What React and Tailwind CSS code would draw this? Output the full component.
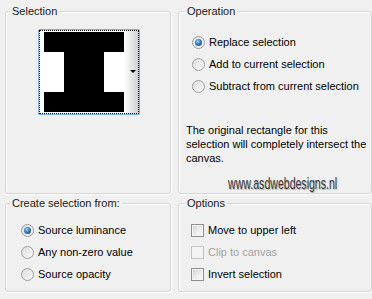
import React from 'react';

const FONT = { fontFamily: '"Liberation Sans", Arial, sans-serif' };

function Group({ title, className = '', children }) {
  return (
    <fieldset
      className={`h-full min-w-0 rounded-[3px] border border-[#d5d5d5] pl-[4px] shadow-[inset_1px_1px_0_#fff,1px_1px_0_#fff] ${className}`}
    >
      <legend className="bg-[#f0f0f0] px-[2px] text-[11px] leading-[14px] text-[#1a1a1a]">{title}</legend>
      {children}
    </fieldset>
  );
}

function Radio({ checked }) {
  return (
    <span className="grid h-[13px] w-[13px] shrink-0 place-items-center rounded-full border border-[#9a9d9f] bg-gradient-to-br from-[#dcdcdc] to-[#fbfbfb]">
      {checked && (
        <span className="h-[7px] w-[7px] rounded-full bg-[radial-gradient(circle_at_40%_35%,#a9d4f5_0%,#3a78b8_45%,#123c6c_100%)]" />
      )}
    </span>
  );
}

function Check({ disabled }) {
  return (
    <span
      className={`h-[13px] w-[13px] shrink-0 border ${
        disabled
          ? 'border-[#c4c4c4] bg-[#f4f4f4]'
          : 'border-[#8c8f91] bg-gradient-to-br from-[#cfcfcf] via-[#ececec] to-[#fafafa] shadow-[inset_0_0_0_1px_#f4f4f4]'
      }`}
    />
  );
}

function Option({ control, label, muted }) {
  return (
    <div className="flex h-[14px] items-center gap-[4px]">
      {control}
      <span className={`text-[11px] leading-[14px] ${muted ? 'text-[#a3a3a3]' : 'text-black'}`}>{label}</span>
    </div>
  );
}

function Preview() {
  return (
    <div className="relative ml-[28px] mt-[11px] h-[86px] w-[102px] rounded-[2px] border border-[#7fb3e3] bg-white shadow-[0_0_1px_#a9cdee]">
      <div className="flex h-full">
        {/* the I-shaped mask */}
        <div className="ml-[5px] mt-[2px] flex h-[80px] w-[80px] flex-col">
          <div className="h-[20px] bg-black" />
          <div className="flex h-[40px]">
            <div className="w-[20px] bg-white" />
            <div className="w-[40px] bg-black" />
            <div className="w-[20px] bg-white" />
          </div>
          <div className="h-[20px] bg-black" />
        </div>
        <div className="ml-auto flex w-[15px] items-center justify-end bg-gradient-to-r from-white to-[#cfcfcf] pr-[3px]">
          <span className="mt-[-2px] h-0 w-0 border-x-[3px] border-t-[3px] border-x-transparent border-t-black" />
        </div>
      </div>
      <div className="pointer-events-none absolute inset-0 border border-dotted border-black" />
    </div>
  );
}

export default function App() {
  return (
    <div style={FONT} className="h-[299px] w-[372px] overflow-hidden bg-[#f0f0f0] pl-[5px] pt-[4px]">
      <div className="grid grid-cols-[166px_194px] grid-rows-[190px_96px] gap-x-[7px] gap-y-[2px]">
        <Group title="Selection">
          <Preview />
        </Group>

        <Group title="Operation" className="pl-[6px]">
          <div className="ml-[7px] mt-[17px] flex flex-col gap-[8px]">
            <Option control={<Radio checked />} label="Replace selection" />
            <Option control={<Radio />} label="Add to current selection" />
            <Option control={<Radio />} label="Subtract from current selection" />
          </div>
          <p className="ml-[1px] mt-[30px] text-[11px] leading-[14px] text-black">
            The original rectangle for this
            <br />
            selection will completely intersect the
            <br />
            canvas.
          </p>
          <div className="ml-[43px] mt-[7px] h-[19px] whitespace-nowrap">
            <span className="inline-block origin-left scale-x-[0.66] text-[16px] leading-[19px] font-medium text-[#3a3a3a] [text-shadow:1px_1px_1px_#a8a8a8]">
              www.asdwebdesigns.nl
            </span>
          </div>
        </Group>

        <Group title="Create selection from:">
          <div className="ml-[11px] mt-[13px] flex flex-col gap-[8px]">
            <Option control={<Radio checked />} label="Source luminance" />
            <Option control={<Radio />} label="Any non-zero value" />
            <Option control={<Radio />} label="Source opacity" />
          </div>
        </Group>

        <Group title="Options" className="pl-[6px]">
          <div className="ml-[6px] mt-[13px] flex flex-col gap-[8px]">
            <Option control={<Check />} label="Move to upper left" />
            <Option control={<Check disabled />} label="Clip to canvas" muted />
            <Option control={<Check />} label="Invert selection" />
          </div>
        </Group>
      </div>
    </div>
  );
}
